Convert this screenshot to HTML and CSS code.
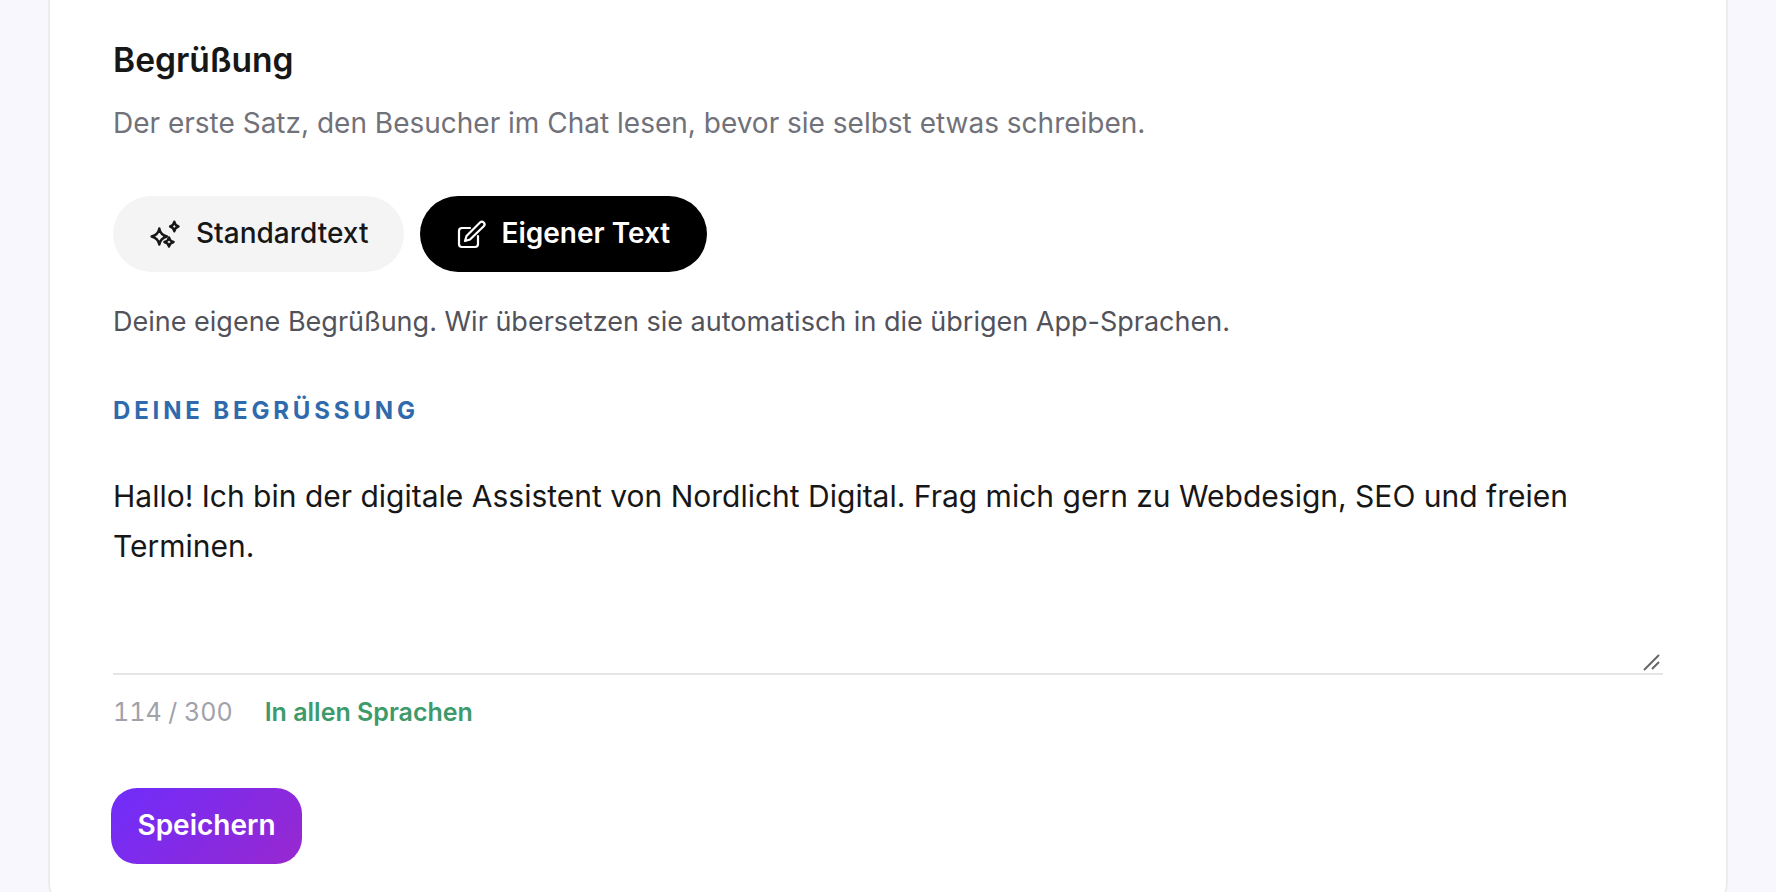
FILE: index.html
```html
<!DOCTYPE html>
<html lang="de">
<head>
<meta charset="utf-8">
<title>Begrüßung</title>
<link rel="stylesheet" href="styles.css">
</head>
<body>
<main class="card">
  <h2 class="title">Begrüßung</h2>
  <p class="lead">Der erste Satz, den Besucher im Chat lesen, bevor sie selbst etwas schreiben.</p>
  <div class="modes">
    <button class="mode" type="button">
      <svg class="icon" viewBox="0 0 28 28" fill="none" stroke="currentColor" stroke-width="2.400" stroke-linejoin="round"><path d="M8.300 8.500Q9.400 14.900 16 16.500 9.400 18.100 8.300 24.500 7.200 18.100 .6 16.500 7.200 14.900 8.300 8.500z"/><path d="M23.300 1.800Q24 5.600 27.500 6.500 24 7.400 23.300 11.200 22.600 7.400 19.100 6.500 22.600 5.600 23.300 1.800z"/><path d="M18 17.500Q18.700 21.100 22.600 22 18.700 22.900 18 26.500 17.300 22.900 13.400 22 17.300 21.100 18 17.500z"/></svg>
      <span class="mode-text">Standardtext</span>
    </button>
    <button class="mode mode-active" type="button">
      <svg class="icon" viewBox="0 0 28 28" fill="none" stroke="currentColor" stroke-width="2.200" stroke-linecap="round" stroke-linejoin="round"><path d="M13 8H5a3 3 0 0 0-3 3v13a3 3 0 0 0 3 3h13a3 3 0 0 0 3-3v-8"/><path d="M23 2.500a2.600 2.600 0 0 1 3.700 3.700L13 19.500l-5 1.500 1.500-5z"/></svg>
      <span class="mode-text">Eigener Text</span>
    </button>
  </div>
  <p class="hint">Deine eigene Begrüßung. Wir übersetzen sie automatisch in die übrigen App-Sprachen.</p>
  <label class="label" for="greeting">DEINE BEGRÜSSUNG</label>
  <div class="field-wrap">
    <textarea class="field" id="greeting">Hallo! Ich bin der digitale Assistent von Nordlicht Digital. Frag mich gern zu Webdesign, SEO und freien Terminen.</textarea>
    <svg class="grip" viewBox="0 0 18 18" fill="none" stroke="#666" stroke-width="2"><path d="M1 17 16 2"/><path d="M9 16 16 9"/></svg>
  </div>
  <div class="meta">
    <span class="count">114 / 300</span>
    <span class="langs">In allen Sprachen</span>
  </div>
  <button class="save" type="button">Speichern</button>
</main>
</body>
</html>
```
FILE: styles.css
```css
* { box-sizing: border-box; }
html, body { margin: 0; height: 892px; overflow: hidden; }
body {
  background: #f8f7fe;
  font-family: Inter, "Liberation Sans", sans-serif;
  padding: 0 48px;
}
.card {
  background: #fff;
  border: 2px solid #ececf0;
  border-top: 0;
  border-radius: 0 0 35px 35px;
  padding: 38px 63px 28px;
  height: 917px;
}
.title {
  margin: 0;
  font-size: 33.6px;
  line-height: 44px;
  font-weight: 600;
  color: #171717;
}
.lead {
  margin: 21px 0 0;
  font-size: 28px;
  line-height: 40px;
  color: #71717a;
}
.modes { display: flex; gap: 16px; margin-top: 53px; }
.mode {
  display: flex;
  align-items: center;
  gap: 17px;
  height: 76px;
  padding: 0 36px 0 38px;
  border: 0;
  border-radius: 38px;
  background: #f4f4f5;
  color: #171717;
  font: 500 28px Inter, sans-serif;
}
.mode-text { margin-bottom: 2px; }
.mode-active { gap: 16px; padding: 0 37px; background: #000; color: #fff; font-weight: 600; }
.icon { width: 28px; height: 28px; flex: none; overflow: visible; }
.hint {
  margin: 30px 0 0;
  font-size: 27px;
  line-height: 40px;
  color: #52525b;
}
.label {
  display: block;
  margin-top: 53px;
  font-size: 24px;
  line-height: 32px;
  font-weight: 700;
  letter-spacing: 0.16em;
  color: #2f6aad;
}
.field-wrap { position: relative; margin-top: 29px; }
.field {
  display: block;
  width: 100%;
  padding: 16px 0;
  height: 219px;
  border: 0;
  border-bottom: 2px solid #e5e5e5;
  background: transparent;
  outline: 0;
  resize: none;
  font: 400 30px/49.500px Inter, sans-serif;
  color: #171717;
}
.grip { position: absolute; right: 2px; bottom: 4px; width: 18px; height: 18px; }
.meta { display: flex; align-items: center; gap: 32px; margin-top: 17px; line-height: 40px; }
.count { font-size: 25px; font-variant-numeric: tabular-nums; color: #a1a1aa; }
.langs { font-size: 25px; font-weight: 600; color: #3d9a6a; }
.save {
  display: block;
  margin: 55.500px 0 0 -2px;
  width: 191px;
  height: 76px;
  padding: 0 0 2px;
  border: 0;
  border-radius: 26px;
  background: linear-gradient(135deg, #6f2dfb, #9828cf);
  color: #fff;
  font: 600 28px Inter, sans-serif;
}
```
